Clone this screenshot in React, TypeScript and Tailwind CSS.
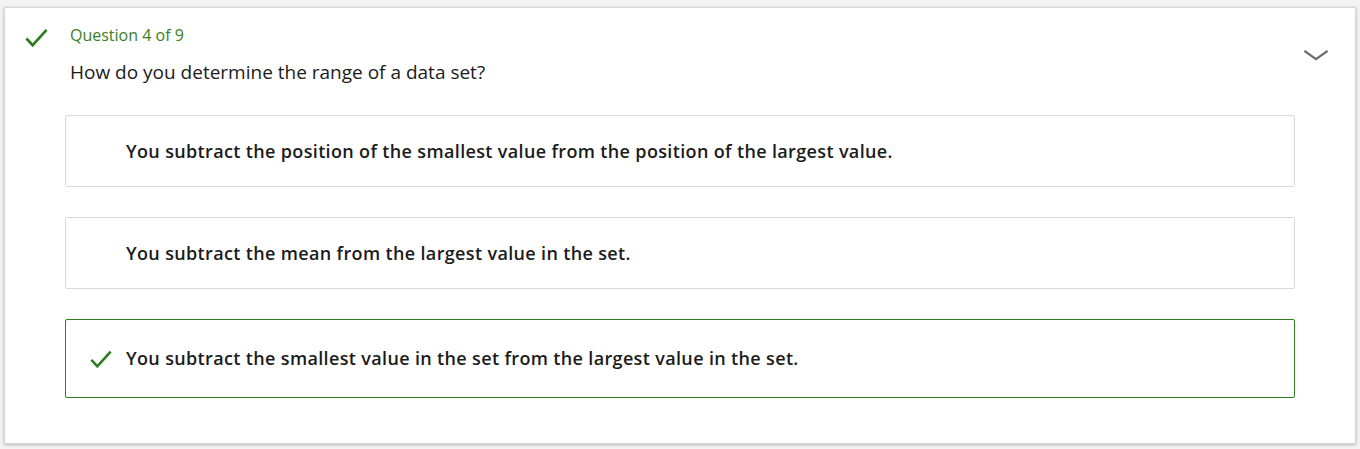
import React from "react";

interface Option {
  text: string;
  correct?: boolean;
}

const options: Option[] = [
  { text: "You subtract the position of the smallest value from the position of the largest value." },
  { text: "You subtract the mean from the largest value in the set." },
  { text: "You subtract the smallest value in the set from the largest value in the set.", correct: true },
];

function Check({ className }: { className?: string }) {
  return (
    <svg viewBox="0 0 24 20" className={className} fill="none">
      <path d="M1.5 10.5 L8 17.5 L22.5 1.5" stroke="#2e7d1e" strokeWidth="2.8" />
    </svg>
  );
}

function App() {
  return (
    <div className="min-h-screen bg-[#f3f3f3] pt-[7px] px-[4px] font-['Open_Sans',sans-serif]">
      <div className="bg-white border border-[#d6d6d6] shadow-[0_1px_3px_rgba(0,0,0,0.25)] h-[437px]">
        <div className="flex">
          <div className="w-[65px] pl-[20px] pt-[20px]">
            <Check className="w-[23px] h-[20px]" />
          </div>
          <div className="flex-1 pt-[17px]">
            <div className="text-[16px] text-[#3b7d23] leading-[20px]">Question 4 of 9</div>
            <div className="mt-[14px] text-[19px] text-[#1b1b1b] leading-[26px]">
              How do you determine the range of a data set?
            </div>
          </div>
          <div className="pt-[41px] pr-[26px]">
            <svg viewBox="0 0 28 14" className="w-[26px] h-[13px]" fill="none">
              <path d="M1.5 2 L14 11 L26.5 2" stroke="#6b6b6b" strokeWidth="2.4" />
            </svg>
          </div>
        </div>
        <div className="pl-[60px] pr-[60px] pt-[30px] flex flex-col gap-[30px]">
          {options.map((o) => (
            <div
              key={o.text}
              className={
                o.correct
                  ? "h-[79px] border border-[#2e7d1e] rounded-[2px] flex items-center pl-[24px]"
                  : "h-[72px] border border-[#d9d9d9] rounded-[2px] flex items-center pl-[60px]"
              }
            >
              {o.correct && <Check className="w-[22px] h-[19px] mr-[14px] mt-[1px]" />}
              <span className="text-[18px] tracking-[0.35px] font-semibold text-[#1b1b1b]">{o.text}</span>
            </div>
          ))}
        </div>
      </div>
    </div>
  );
}

export default App;
